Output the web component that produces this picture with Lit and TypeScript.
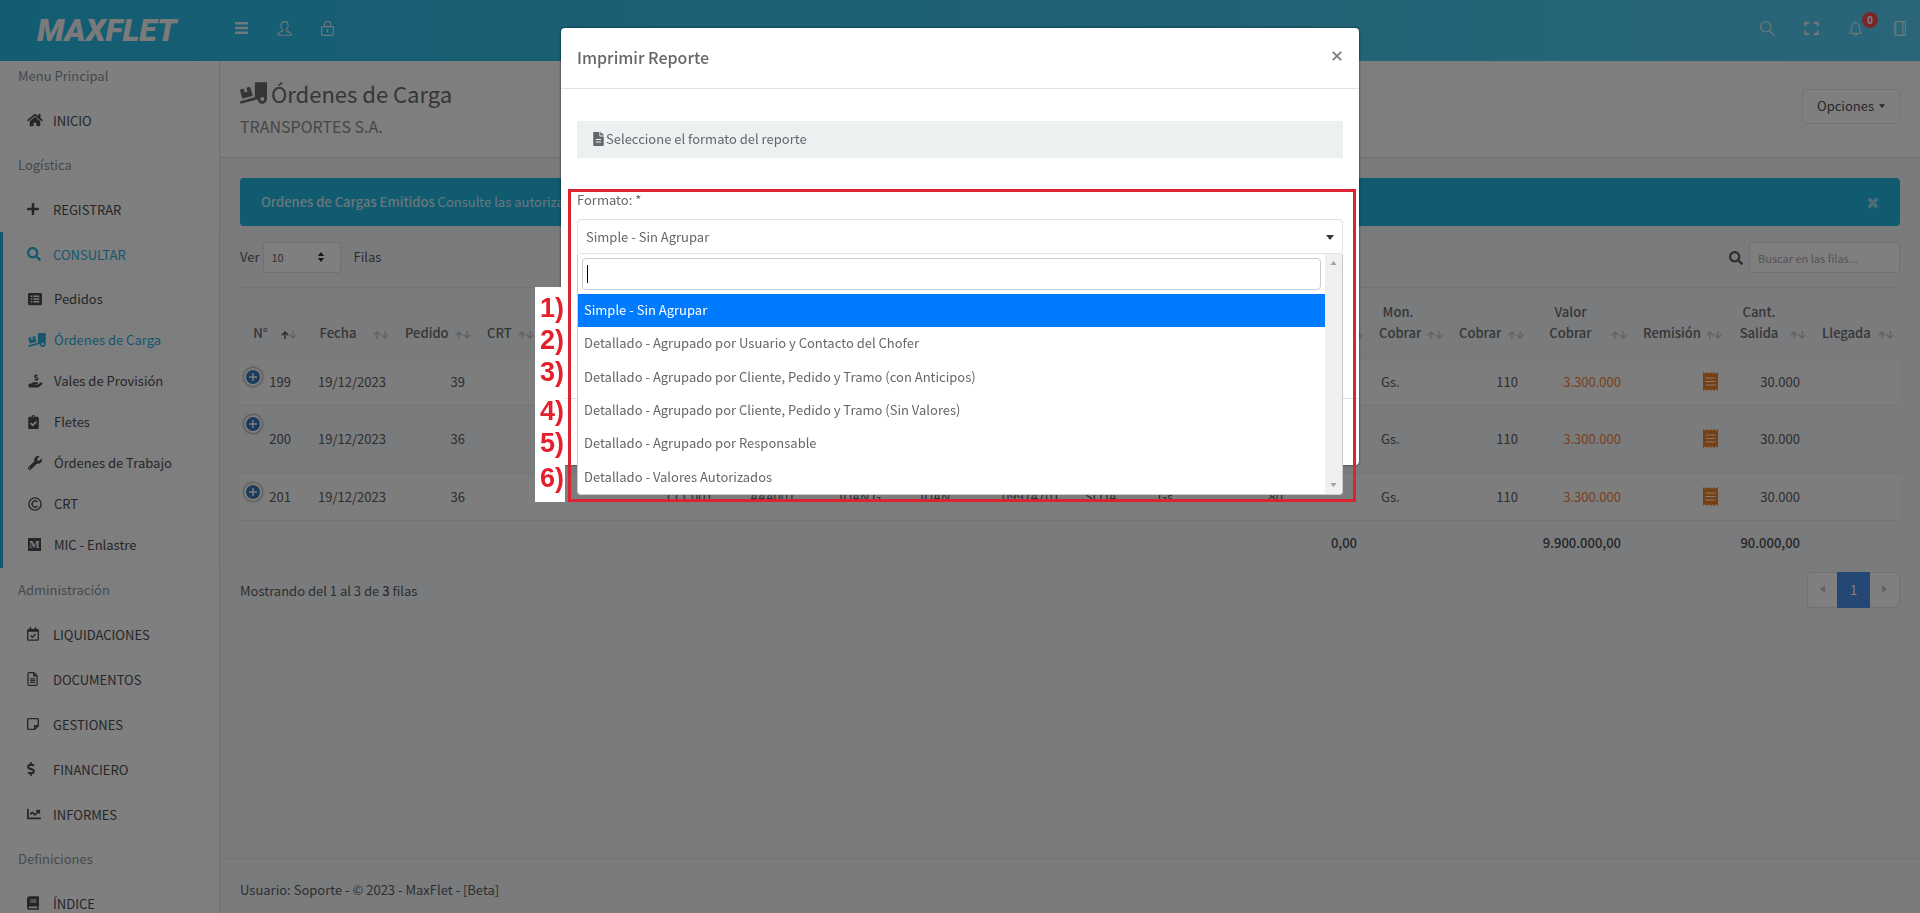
import { LitElement, html, svg, css, nothing } from "lit";
import { customElement, state } from "lit/decorators.js";

type Icon = { box: string; body: unknown };

const solid = (box: string, d: string): Icon => ({ box, body: svg`<path fill="currentColor" fill-rule="evenodd" d=${d}></path>` });
const line = (box: string, d: string, width = 1): Icon => ({
  box,
  body: svg`<path fill="none" stroke="currentColor" stroke-width=${width} stroke-linejoin="round" d=${d}></path>`,
});

const ICONS: Record<string, Icon> = {
  home: solid("0 0 576 512", "M280.37 148.26L96 300.11V464a16 16 0 0 0 16 16l112.06-.29a16 16 0 0 0 15.92-16V368a16 16 0 0 1 16-16h64a16 16 0 0 1 16 16v95.64a16 16 0 0 0 16 16.05L464 480a16 16 0 0 0 16-16V300L295.67 148.26a12.19 12.19 0 0 0-15.3 0zM571.6 251.47L488 182.56V44.05a12 12 0 0 0-12-12h-56a12 12 0 0 0-12 12v72.61L318.47 43a48 48 0 0 0-61 0L4.34 251.47a12 12 0 0 0-1.6 16.9l25.5 31A12 12 0 0 0 45.15 301l235.22-193.74a12.19 12.19 0 0 1 15.3 0L530.9 301a12 12 0 0 0 16.9-1.6l25.5-31a12 12 0 0 0-1.7-16.93z"),
  plus: solid("0 0 448 512", "M416 208H272V64c0-17.67-14.33-32-32-32h-32c-17.67 0-32 14.33-32 32v144H32c-17.67 0-32 14.33-32 32v32c0 17.67 14.33 32 32 32h144v144c0 17.67 14.33 32 32 32h32c17.67 0 32-14.33 32-32V304h144c17.67 0 32-14.33 32-32v-32c0-17.67-14.33-32-32-32z"),
  search: solid("0 0 512 512", "M505 442.7L405.3 343c-4.5-4.5-10.6-7-17-7H372c27.6-35.3 44-79.7 44-128C416 93.1 322.9 0 208 0S0 93.1 0 208s93.1 208 208 208c48.3 0 92.7-16.4 128-44v16.3c0 6.4 2.5 12.5 7 17l99.7 99.7c9.4 9.4 24.6 9.4 33.9 0l28.3-28.3c9.4-9.4 9.4-24.6.1-34zM208 336c-70.7 0-128-57.2-128-128 0-70.7 57.2-128 128-128 70.7 0 128 57.2 128 128 0 70.7-57.2 128-128 128z"),
  list: solid("0 0 512 512", "M464 32H48C21.5 32 0 53.5 0 80v352c0 26.5 21.5 48 48 48h416c26.500 0 48-21.5 48-48V80c0-26.500-21.500-48-48-48zM100 132h56v48h-56zM196 132h216v48H196zM100 232h56v48h-56zM196 232h216v48H196zM100 332h56v48h-56zM196 332h216v48H196z"),
  truck: solid("0 0 640 512", "M50.2 375.6c2.3 8.5 11.1 13.6 19.6 11.3l216.4-58c8.5-2.3 13.6-11.1 11.3-19.6l-49.7-185.5c-2.3-8.5-11.1-13.6-19.6-11.3L151 133.300l24.800 92.700-61.800 16.500-24.800-92.700-77.300 20.700C3.400 172.800-1.700 181.600.6 190.100l49.600 185.500zM384 0c-17.700 0-32 14.300-32 32v323.600L5.900 450c-4.300 1.200-6.800 5.600-5.600 9.800l12.600 46.300c1.200 4.300 5.600 6.800 9.800 5.600l393.700-107.400C418.800 464.100 467.600 512 528 512c61.900 0 112-50.100 112-112V0H384zm144 448c-26.500 0-48-21.500-48-48s21.500-48 48-48 48 21.500 48 48-21.500 48-48 48z"),
  hand: {
    box: "0 0 16 16",
    body: svg`<path fill="currentColor" d="M0 11.200h2.600l1.500-1.100c.6-.4 1.200-.6 1.900-.6h4c1.300 0 1.300 1.900 0 1.900H7.300v.6h3.500l2.900-2c1.300-.9 2.900.6 1.800 1.800l-4 3.200c-.4.300-.9.500-1.400.5H0z"></path><path fill="none" stroke="currentColor" stroke-width="1.500" d="M10.600 2.300c-1-.7-3.700-.8-3.700.6 0 1.600 3.900.8 3.900 2.500 0 1.500-2.900 1.400-4 .5M8.800.2v1.600M8.800 6.300v1.500"></path>`,
  },
  clipboard: solid("0 0 384 512", "M336 64h-80c0-35.300-28.700-64-64-64s-64 28.700-64 64H48C21.500 64 0 85.500 0 112v352c0 26.500 21.500 48 48 48h288c26.500 0 48-21.500 48-48V112c0-26.500-21.500-48-48-48zM192 40c13.300 0 24 10.700 24 24s-10.700 24-24 24-24-10.700-24-24 10.700-24 24-24zm121.200 231.800l-143 141.800c-4.700 4.700-12.300 4.600-17-.1l-82.600-83.300c-4.700-4.700-4.600-12.300.1-17L99.100 285c4.700-4.700 12.300-4.600 17 .1l46 46.400 106-105.200c4.700-4.700 12.300-4.600 17 .1l28.200 28.400c4.700 4.800 4.600 12.300-.1 17z"),
  wrench: solid("0 0 512 512", "M507.730 109.100c-2.240-9.030-13.540-12.090-20.120-5.510l-74.360 74.360-67.880-11.310-11.310-67.880 74.360-74.360c6.620-6.620 3.430-17.900-5.660-20.160-47.380-11.740-99.550.91-136.580 37.930-39.640 39.640-50.550 97.100-34.050 147.200L18.740 402.760c-24.990 24.990-24.990 65.510 0 90.500 24.990 24.990 65.510 24.990 90.500 0l213.210-213.210c50.120 16.710 107.470 5.680 147.370-34.220 37.070-37.070 49.700-89.320 37.910-136.730zM64 472c-13.250 0-24-10.750-24-24 0-13.260 10.750-24 24-24s24 10.740 24 24c0 13.250-10.750 24-24 24z"),
  copyright: {
    box: "0 0 16 16",
    body: svg`<circle cx="8" cy="8" r="7" fill="none" stroke="currentColor" stroke-width="1.600"></circle><path fill="none" stroke="currentColor" stroke-width="1.700" d="M11 10.300a3.600 3.600 0 1 1 0-4.600"></path>`,
  },
  calendar: {
    box: "0 0 14 16",
    body: svg`<path fill="none" stroke="currentColor" stroke-width="1.600" d="M1.800 3h10.400a1 1 0 0 1 1 1v10.200a1 1 0 0 1-1 1H1.800a1 1 0 0 1-1-1V4a1 1 0 0 1 1-1zM4.200 9.800l2 2 3.800-3.900"></path><path fill="currentColor" d="M1 2.500h12v3H1zM3 0h2v3H3zM9 0h2v3H9z"></path>`,
  },
  document: line("0 0 12 16", "M1.800.8h5.900l3.500 3.500v9.900a1 1 0 0 1-1 1H1.800a1 1 0 0 1-1-1V1.800a1 1 0 0 1 1-1zM7.500.8v3.700h3.700M3 7.800h6M3 9.900h6M3 12h6", 1.4),
  note: line("0 0 14 14", "M1.800.8h10.400a1 1 0 0 1 1 1V9l-4.200 4.200H1.800a1 1 0 0 1-1-1V1.800a1 1 0 0 1 1-1zM13 9H9v4", 1.6),
  dollar: solid("0 0 288 512", "M209.200 233.400l-108-31.600C88.700 198.200 80 186.500 80 173.500c0-16.300 13.200-29.500 29.500-29.500h66.300c12.200 0 24.200 3.700 34.200 10.500 6.100 4.100 14.300 3.100 19.500-2l34.800-34c7.100-6.900 6.100-18.400-1.800-24.500C238 74.800 207.400 64.100 176 64V16c0-8.800-7.200-16-16-16h-32c-8.800 0-16 7.200-16 16v48h-2.500C45.800 64-5.400 118.700.5 183.600c4.200 46.100 39.400 83.600 83.800 96.600l102.500 30c12.500 3.700 21.200 15.300 21.200 28.300 0 16.300-13.200 29.500-29.500 29.500h-66.300C100 368 88 364.300 78 357.500c-6.100-4.100-14.300-3.100-19.500 2l-34.800 34c-7.100 6.900-6.100 18.400 1.800 24.500 24.500 19.200 55.100 29.900 86.500 30v48c0 8.800 7.200 16 16 16h32c8.800 0 16-7.200 16-16v-48.200c46.600-.9 90.300-28.600 105.700-72.700 21.500-61.600-14.600-124.800-72.500-141.700z"),
  chart: solid("0 0 512 512", "M496 384H64V80c0-8.840-7.160-16-16-16H16C7.160 64 0 71.160 0 80v336c0 17.670 14.330 32 32 32h464c8.840 0 16-7.160 16-16v-32c0-8.840-7.160-16-16-16zM464 96H345.940c-21.380 0-32.090 25.850-16.970 40.970l32.400 32.400L288 242.750l-73.370-73.370c-12.500-12.500-32.760-12.500-45.250 0l-68.690 68.690c-6.250 6.250-6.250 16.380 0 22.630l22.620 22.620c6.250 6.250 16.380 6.250 22.630 0L192 237.250l73.370 73.370c12.500 12.500 32.760 12.500 45.250 0l96-96 32.400 32.400c15.120 15.120 40.970 4.410 40.970-16.970V112c.01-8.840-7.150-16-15.990-16z"),
  book: solid("0 0 14 16", "M3 0h10.200c.4 0 .8.4.8.8v10.400c0 .3-.1.500-.3.600-.1.500-.1 1.600 0 2.100.2.200.3.300.3.500v.8c0 .4-.4.800-.8.800H3a3 3 0 0 1-3-3V3a3 3 0 0 1 3-3zM3 12a1 1 0 0 0 0 2h9v-2zM4 4v1h7V4zM4 6.300v1h7v-1z"),
  file: solid("0 0 384 512", "M224 136V0H24C10.700 0 0 10.700 0 24v464c0 13.300 10.700 24 24 24h336c13.300 0 24-10.700 24-24V160H248c-13.200 0-24-10.800-24-24zM96 256h192v40H96zM96 344h192v40H96zM384 121.900v6.100H256V0h6.100c6.400 0 12.500 2.500 17 7l97.900 98c4.500 4.500 7 10.600 7 16.900z"),
  receipt: solid("0 0 15 19", "M0 0l2 1.800L4 0l1.800 1.800L7.500 0l1.700 1.800L11 0l2 1.800L15 0v19l-2-1.800L11 19l-1.800-1.800L7.500 19l-1.700-1.800L4 19l-2-1.800L0 19zM2.500 5.400v1h10v-1zM2.500 9v1h10V9zM2.500 12.600v1h10v-1z"),
  menu: solid("0 0 13 12", "M0 0h13v2.400H0zM0 4.800h13v2.400H0zM0 9.600h13v2.400H0z"),
  user: line("0 0 15 15", "M7.500.6c2.300 0 3.600 1.700 3.600 3.900 0 1.600-.6 3.200-1.700 4.200v1.200c0 .6 4.900 1 4.900 4.400H.7c0-3.400 4.900-3.800 4.900-4.400V8.700C4.500 7.700 3.900 6.100 3.900 4.500 3.900 2.300 5.200.6 7.500.6z", 1.1),
  lock: line("0 0 13 15", "M1.500 5.600h10a.9.9 0 0 1 .9.9v7a.9.9 0 0 1-.9.9h-10a.9.9 0 0 1-.9-.9v-7a.9.9 0 0 1 .9-.9zM3.300 5.500V3.700a3.200 3.200 0 0 1 6.400 0v1.800M6.500 8.500v3M5.700 8.800h1.600", 1.1),
  find: line("0 0 15 15", "M10.900 5.800a5.200 5.200 0 1 1-10.400 0 5.200 5.200 0 0 1 10.400 0zM9.400 9.600l5 5", 1.1),
  expand: line("0 0 14 13", "M1.200 4.500V1.200h3.500M9.300 1.200h3.500v3.300M12.800 8.500v3.300H9.300M4.700 11.800H1.200V8.500", 2),
  bell: line("0 0 13 15", "M6.500.4v1.200M.7 12.300c1.300-1.300 1.900-2.300 1.900-5.800 0-3 1.500-4.800 3.900-4.800s3.900 1.800 3.900 4.800c0 3.500.6 4.500 1.900 5.800zM4.800 12.500c0 2.400 3.400 2.400 3.400 0", 1.1),
  notebook: line("0 0 13 15", "M2.600.6h9.800v13.800H2.600zM9.800.6v13.800M.3 3h3.200M.3 5.300h3.200M.3 7.500h3.200M.3 9.700h3.200M.3 12h3.200", 1.1),
  close: line("0 0 10 10", "M.8.8l8.400 8.400M9.200.8L.8 9.200", 1.8),
  closeBold: line("0 0 12 12", "M1.800 1.800l8.400 8.400M10.200 1.800l-8.400 8.400", 3.4),
  up: line("0 0 8 8", "M4 8V1M.7 4.300L4 1l3.300 3.300", 1.5),
  down: line("0 0 8 8", "M4 0v7M.7 3.700L4 7l3.300-3.300", 1.5),
  caretDown: solid("0 0 8 5", "M0 0h8L4 5z"),
  caretUp: solid("0 0 8 5", "M0 5h8L4 0z"),
  caretLeft: solid("0 0 5 8", "M5 0v8L0 4z"),
  caretRight: solid("0 0 5 8", "M0 0v8l5-4z"),
};

const icon = (name: string, cls: string) => {
  const i = ICONS[name];
  return html`<svg class=${cls} viewBox=${i.box} aria-hidden="true">${i.body}</svg>`;
};

const base = css`
  :host { display: block; }
  * { box-sizing: border-box; }
  svg { display: block; flex: none; }
  button, input, select { font: inherit; color: inherit; margin: 0; }
  button { padding: 0; border: 0; background: none; cursor: pointer; }
  a { color: inherit; text-decoration: none; }
`;

@customElement("mf-topbar")
class Topbar extends LitElement {
  static styles = [base, css`
    .bar { display: flex; align-items: flex-start; height: 61px; padding: 0 13px 0 37px; color: #ddeff6;
      background: linear-gradient(90deg, #26bae6, #54cbf0); }
    .brand { width: 197px; font: italic 900 32px/60px Roboto, sans-serif; color: #f4f4f4; }
    .group { display: flex; align-items: center; gap: 28px; height: 56px; }
    .right { margin-left: auto; gap: 29px; }
    .icon { width: 15px; height: 15px; }
    .wide { height: 12px; }
    .alerts { position: relative; }
    .badge { position: absolute; left: 14px; top: -9px; width: 16px; height: 16px; border-radius: 8px;
      background: #f44c50; color: #fff; font-size: 10px; line-height: 15px; font-weight: 700; text-align: center; }
  `];
  render() {
    return html`<header class="bar">
      <a class="brand" href="#">MAXFLET</a>
      <nav class="group">
        <button aria-label="Menú">${icon("menu", "icon wide")}</button>
        <button aria-label="Usuario">${icon("user", "icon")}</button>
        <button aria-label="Bloquear">${icon("lock", "icon")}</button>
      </nav>
      <nav class="group right">
        <button aria-label="Buscar">${icon("find", "icon")}</button>
        <button aria-label="Pantalla completa">${icon("expand", "icon")}</button>
        <button class="alerts" aria-label="Notificaciones">${icon("bell", "icon")}<span class="badge">0</span></button>
        <button aria-label="Panel">${icon("notebook", "icon")}</button>
      </nav>
    </header>`;
  }
}

type Item = { label: string; icon: string; w: number; active?: boolean; children?: Item[] };
const MENU: { title: string; items: Item[] }[] = [
  { title: "Menu Principal", items: [{ label: "INICIO", icon: "home", w: 16 }] },
  {
    title: "Logística",
    items: [
      { label: "REGISTRAR", icon: "plus", w: 12 },
      {
        label: "CONSULTAR", icon: "search", w: 14, active: true,
        children: [
          { label: "Pedidos", icon: "list", w: 14 },
          { label: "Órdenes de Carga", icon: "truck", w: 18, active: true },
          { label: "Vales de Provisión", icon: "hand", w: 15 },
          { label: "Fletes", icon: "clipboard", w: 11 },
          { label: "Órdenes de Trabajo", icon: "wrench", w: 14 },
          { label: "CRT", icon: "copyright", w: 14 },
          { label: "MIC - Enlastre", icon: "medium", w: 13 },
        ],
      },
    ],
  },
  {
    title: "Administración",
    items: [
      { label: "LIQUIDACIONES", icon: "calendar", w: 12 },
      { label: "DOCUMENTOS", icon: "document", w: 11 },
      { label: "GESTIONES", icon: "note", w: 12 },
      { label: "FINANCIERO", icon: "dollar", w: 8 },
      { label: "INFORMES", icon: "chart", w: 14 },
    ],
  },
  { title: "Definiciones", items: [{ label: "ÍNDICE", icon: "book", w: 12 }] },
];

@customElement("mf-sidebar")
class Sidebar extends LitElement {
  static styles = [base, css`
    :host { width: 220px; flex: none; overflow: hidden; background: #fff; border-right: 1px solid #dcdfe3; color: #4b4d50; font-size: 13px; }
    .head { padding: 7px 0 7px 18px; line-height: 29px; height: 44px; color: #8b9297; }
    .head.first { padding-top: 0; height: 37px; }
    ul { list-style: none; margin: 0; padding: 0; }
    .link { display: flex; align-items: center; height: 45px; padding: 0 0 1px 27px; }
    .mark { width: 26px; display: flex; }
    .glyph { height: 14px; }
    .medium { width: 13px; height: 13px; background: #4b4d50; color: #fff; font: 700 11px/13px "Liberation Serif", serif; text-align: center; }
    .on { color: #29aedb; }
    .open { border-left: 3px solid #1fb1de; background: #fdfdfd; }
    .open .link { padding-left: 24px; }
    .sub { padding: 1px 0 3px; }
    .sub .link { height: 41px; padding: 0 0 0 25px; }
  `];
  private link(i: Item): unknown {
    return html`<a class="link ${i.active ? "on" : ""}" href="#">
      <span class="mark">${i.icon === "medium" ? html`<span class="medium" aria-hidden="true">M</span>` : this.glyph(i)}</span>${i.label}</a>`;
  }
  private glyph(i: Item) {
    const g = ICONS[i.icon];
    return html`<svg class="glyph" style="width:${i.w}px" viewBox=${g.box} aria-hidden="true">${g.body}</svg>`;
  }
  render() {
    return html`<nav>
      ${MENU.map((s, n) => html`
        <div class="head ${n ? "" : "first"}">${s.title}</div>
        <ul>${s.items.map((i) => html`<li class=${i.children ? "open" : ""}>${this.link(i)}
          ${i.children ? html`<ul class="sub">${i.children.map((c) => html`<li>${this.link(c)}</li>`)}</ul>` : nothing}
        </li>`)}</ul>`)}
    </nav>`;
  }
}

type Column = { head: string[]; width: number; align: string; sorted?: boolean };
const COLUMNS: Column[] = [
  { head: ["N°"], width: 63, align: "end", sorted: true },
  { head: ["Fecha"], width: 92, align: "date" },
  { head: ["Pedido"], width: 82, align: "end" },
  { head: ["CRT"], width: 63, align: "end" },
  { head: [], width: 115, align: "start" },
  { head: [], width: 83, align: "start" },
  { head: [], width: 86, align: "start" },
  { head: [], width: 81, align: "start" },
  { head: [], width: 85, align: "start" },
  { head: [], width: 83, align: "start" },
  { head: [], width: 73, align: "start" },
  { head: [], width: 74, align: "start" },
  { head: [], width: 75, align: "end" },
  { head: [], width: 74, align: "end" },
  { head: ["Mon.", "Cobrar"], width: 80, align: "start" },
  { head: ["Cobrar"], width: 81, align: "end" },
  { head: ["Valor", "Cobrar"], width: 103, align: "end amount" },
  { head: ["Remisión"], width: 95, align: "end slip" },
  { head: ["Cant.", "Salida"], width: 84, align: "end" },
  { head: ["Llegada"], width: 88, align: "end" },
];
const none = (n: number): string[] => Array(n).fill("");
const ROWS = [
  { cls: "", cells: ["199", "19/12/2023", "39", ...none(11), "Gs.", "110", "3.300.000", "*", "30.000", ""] },
  { cls: "tall", cells: ["200", "19/12/2023", "36", ...none(11), "Gs.", "110", "3.300.000", "*", "30.000", ""] },
  { cls: "", cells: ["201", "19/12/2023", "36", "", "", "CCC001", "AAA001", "JUAN G.", "JUAN", "09914701", "SOJA", "Gs.", "80", "", "Gs.", "110", "3.300.000", "*", "30.000", ""] },
];
const TOTALS = [...none(13), "0,00", "", "", "9.900.000,00", "", "90.000,00", ""];

@customElement("mf-orders")
class Orders extends LitElement {
  static styles = [base, css`
    :host { flex: 1; min-width: 0; display: flex; flex-direction: column; background: #f4f6f8; color: #5a5c5f; font-size: 13px; line-height: 21px; }
    .head { display: flex; justify-content: space-between; height: 97px; padding: 12px 20px 0 20px; background: #fcfcfe; border-bottom: 1px solid #dadce0; }
    h1 { display: flex; align-items: center; gap: 4px; margin: 0; font-weight: 400; font-size: 22px; line-height: 40px; color: #6a6c70; }
    .truck { width: 27px; height: 22px; }
    h2 { margin: 0; font-weight: 400; font-size: 16px; line-height: 26px; color: #8a8d92; }
    .options { display: flex; align-items: center; gap: 5px; height: 35px; margin-top: 16px; padding: 0 14px 2px; background: #fff;
      border: 1px solid #e6e8ec; border-radius: 3px; color: #4b4d50; }
    .caret { width: 6px; height: 4px; }
    .content { flex: 1; padding: 20px 20px 0; }
    .alert { display: flex; align-items: center; justify-content: space-between; height: 48px; padding: 0 21px 2px; border-radius: 4px; background: #22b6e2; color: #d3edf6; }
    b { font-weight: 500; }
    .dismiss { width: 12px; height: 12px; color: #a0dbee; margin-top: 3px; }
    .tools { display: flex; align-items: center; height: 31px; margin: 16px 0 14px; }
    .word { padding-bottom: 2px; }
    .rows { position: relative; margin: 0 13px 0 3px; }
    select, input { height: 31px; border: 1px solid #dfe1e5; border-radius: 3px; background: #fff; font-size: 11px; outline: 0; }
    select { width: 78px; padding: 0 8px; appearance: none; }
    .updown { position: absolute; right: 16px; top: 10px; display: grid; gap: 2px; pointer-events: none; color: #303030; }
    .tick { width: 8px; height: 4px; }
    .lens { width: 14px; height: 14px; margin: 0 6px 0 auto; }
    input { width: 151px; padding: 0 8px; }
    input::placeholder { color: #a6a8ac; opacity: 1; }
    table { width: 100%; table-layout: fixed; border-collapse: separate; border-spacing: 0; }
    th, td { position: relative; padding: 0 12px 2px; border-top: 1px solid #e8eaed; font-weight: 400; white-space: nowrap; }
    th { padding: 13px 32px 15px 10px; height: 71px; vertical-align: bottom; font-weight: 500; color: #6a6c70; text-align: center; }
    .sort { position: absolute; right: 6px; bottom: 19px; display: flex; color: #c4c6c9; }
    .arrow { width: 8px; height: 8px; }
    .asc { color: #5a5c5f; }
    td { height: 47px; text-align: left; }
    .end { text-align: right; }
    td.date { padding-left: 15px; }
    .tall td { height: 68px; }
    tbody tr:nth-child(odd) td { background: #fafafc; }
    .amount { color: #f4803a; }
    td.slip { color: #ee8024; padding-right: 10px; }
    .receipt { width: 15px; height: 19px; margin-left: auto; }
    .toggle { position: absolute; left: 4px; top: 9px; width: 18px; height: 18px; border: 2px solid #fff; border-radius: 9px;
      background: #3579b5; color: #fff; box-shadow: 0 0 3px #444; display: grid; place-items: center; }
    .cross { width: 8px; height: 8px; }
    tfoot td { font-weight: 500; height: 46px; color: #4b4d50; }
    .foot { display: flex; justify-content: space-between; align-items: center; margin-top: 6px; height: 36px; }
    .pages { display: flex; border: 1px solid #e0e2e6; border-radius: 4px; background: #fff; }
    .page { width: 29px; height: 34px; display: grid; place-items: center; padding-bottom: 2px; color: #c4c6ca; }
    .current { width: 33px; height: 36px; margin: -1px 0; background: #4a8fe8; color: #fff; }
    .tri { width: 5px; height: 8px; }
    footer { height: 55px; padding: 20px 20px 0; border-top: 1px solid #e4e6e9; }
  `];
  @state() private filter = "";
  private cross = svg`<path d="M4 0v8M0 4h8" stroke="currentColor" stroke-width="1.400"></path>`;
  private cell(value: string, i: number) {
    return html`<td class=${COLUMNS[i].align}>
      ${i === 0 ? html`<button class="toggle" aria-label="Ver detalle"><svg class="cross" viewBox="0 0 8 8">${this.cross}</svg></button>` : nothing}
      ${value === "*" ? icon("receipt", "receipt") : value}</td>`;
  }
  render() {
    return html`
      <div class="head">
        <div><h1>${icon("truck", "truck")}Órdenes de Carga</h1><h2>TRANSPORTES S.A.</h2></div>
        <button class="options">Opciones ${icon("caretDown", "caret")}</button>
      </div>
      <div class="content">
        <div class="alert" role="alert"><span><b>Ordenes de Cargas Emitidos</b> Consulte las autorizac</span>
          <button aria-label="Cerrar aviso">${icon("closeBold", "dismiss")}</button></div>
        <div class="tools">
          <label class="word" for="size">Ver</label>
          <span class="rows"><select id="size"><option>10</option></select>
            <span class="updown">${icon("caretUp", "tick")}${icon("caretDown", "tick")}</span></span>
          <span class="word">Filas</span>
          ${icon("search", "lens")}
          <input type="text" aria-label="Buscar en las filas" placeholder="Buscar en las filas..." .value=${this.filter}
            @input=${(e: Event) => (this.filter = (e.target as HTMLInputElement).value)}>
        </div>
        <table>
          <colgroup>${COLUMNS.map((c) => html`<col style="width:${c.width}px">`)}</colgroup>
          <thead><tr>${COLUMNS.map((c) => html`<th scope="col">${c.head.map((h, n) => html`${n ? html`<br>` : nothing}${h}`)}
            <span class="sort">${icon("up", c.sorted ? "arrow asc" : "arrow")}${icon("down", "arrow")}</span></th>`)}</tr></thead>
          <tbody>${ROWS.map((r) => html`<tr class=${r.cls}>${r.cells.map((v, i) => this.cell(v, i))}</tr>`)}</tbody>
          <tfoot><tr>${TOTALS.map((v) => html`<td class="end">${v}</td>`)}</tr></tfoot>
        </table>
        <div class="foot">
          <span>Mostrando del 1 al 3 de <b>3</b> filas</span>
          <nav class="pages" aria-label="Páginas">
            <button class="page" aria-label="Anterior">${icon("caretLeft", "tri")}</button>
            <button class="page current">1</button>
            <button class="page" aria-label="Siguiente">${icon("caretRight", "tri")}</button>
          </nav>
        </div>
      </div>
      <footer>Usuario: Soporte - © 2023 - MaxFlet - [Beta]</footer>`;
  }
}

const FORMATS = [
  "Simple - Sin Agrupar",
  "Detallado - Agrupado por Usuario y Contacto del Chofer",
  "Detallado - Agrupado por Cliente, Pedido y Tramo (con Anticipos)",
  "Detallado - Agrupado por Cliente, Pedido y Tramo (Sin Valores)",
  "Detallado - Agrupado por Responsable",
  "Detallado - Valores Autorizados",
];

@customElement("mf-report-dialog")
class ReportDialog extends LitElement {
  static styles = [base, css`
    .dialog { position: relative; width: 798px; margin: 28px auto 0; background: #fff; border-radius: 4px; box-shadow: 0 0 3px rgba(0, 0, 0, .6); color: #646669; font-size: 13px; line-height: 21px; }
    .title { display: flex; justify-content: space-between; align-items: center; height: 61px; padding: 0 17px 2px 16px; border-bottom: 1px solid #dee2e6; }
    h3 { margin: 0; font-size: 16px; font-weight: 500; }
    .close { width: 10px; height: 10px; margin-bottom: 2px; color: #7a7c7f; }
    .body { height: 309px; padding: 32px 16px 0; }
    .hint { display: flex; align-items: center; gap: 2px; height: 37px; margin: 0 0 32px; padding: 0 0 2px 16px; background: #ecf0f1; }
    .file { width: 11px; height: 14px; }
    .field { position: relative; }
    label { display: block; height: 29px; line-height: 20px; }
    .pick { display: block; width: 100%; height: 35px; padding: 0 8px; border: 1px solid #dde3e6; border-radius: 4px; background: #fff; appearance: none; outline: 0; }
    .caret { position: absolute; right: 9px; top: 45px; width: 8px; height: 5px; color: #343a40; }
    .drop { position: absolute; left: 0; right: 0; top: 64px; height: 241px; display: flex; background: #fff; border: 1px solid #c8ccd0; border-top: 0; border-radius: 0 0 4px 4px; overflow: hidden; }
    .list { flex: 1; display: flex; flex-direction: column; }
    .filter { height: 32px; margin: 4px; border: 1px solid #c8ccd0; border-radius: 4px; padding: 0 4px; outline: 0; }
    .find { position: relative; display: grid; }
    .cursor { position: absolute; left: 9px; top: 11px; width: 1px; height: 18px; background: #000; }
    .options { flex: 1; display: grid; grid-auto-rows: 1fr; }
    .option { padding: 0 6px 2px; text-align: left; }
    .chosen { background: #007bff; color: #fff; }
    .scroll { width: 17px; background: #f0f0f0; color: #a3a3a3; display: flex; flex-direction: column; justify-content: space-between; align-items: center; padding: 7px 0; }
    .tip { width: 7px; height: 4px; }
    .bottom { height: 67px; border-top: 1px solid #dee2e6; }
  `];
  @state() private chosen = 0;
  render() {
    return html`<section class="dialog" role="dialog" aria-modal="true" aria-labelledby="title">
      <div class="title"><h3 id="title">Imprimir Reporte</h3><button aria-label="Cerrar">${icon("close", "close")}</button></div>
      <div class="body">
        <p class="hint">${icon("file", "file")}Seleccione el formato del reporte</p>
        <div class="field">
          <label for="format">Formato: *</label>
          <select class="pick" id="format"><option>${FORMATS[this.chosen]}</option></select>
          ${icon("caretDown", "caret")}
          <div class="drop">
            <div class="list">
              <div class="find"><input class="filter" type="text" aria-label="Filtrar formatos"><span class="cursor"></span></div>
              <div class="options" role="listbox">
                ${FORMATS.map((f, i) => html`<button class="option ${i === this.chosen ? "chosen" : ""}" role="option"
                  aria-selected=${i === this.chosen} @click=${() => (this.chosen = i)}>${f}</button>`)}
              </div>
            </div>
            <div class="scroll" aria-hidden="true">${icon("caretUp", "tip")}${icon("caretDown", "tip")}</div>
          </div>
        </div>
      </div>
      <div class="bottom"></div>
      <mf-callouts></mf-callouts>
    </section>`;
  }
}

const CALLOUTS = [4, 36, 68, 107, 139, 174];

@customElement("mf-callouts")
class Callouts extends LitElement {
  static styles = [base, css`
    :host { position: absolute; left: -26px; right: 3px; top: 161px; height: 313px; pointer-events: none; }
    .frame { position: absolute; inset: 0 0 0 33px; border: 3px solid #dc2430; }
    .strip { position: absolute; left: 0; top: 98px; bottom: 0; width: 30px; background: #fff; }
    .tag { position: absolute; left: 5px; color: #e4202e; font: 700 27px/34px "Liberation Sans", Arial, sans-serif; }
  `];
  render() {
    return html`<div class="frame"></div><div class="strip">
      ${CALLOUTS.map((top, i) => html`<span class="tag" style="top:${top}px">${i + 1})</span>`)}</div>`;
  }
}

@customElement("app-root")
class AppRoot extends LitElement {
  static styles = [base, css`
    :host { font-family: "Noto Sans CJK SC", "Noto Sans", sans-serif; }
    .page { display: flex; flex-direction: column; height: 100vh; overflow: hidden; }
    .main { flex: 1; min-height: 0; display: flex; }
    .shade { position: fixed; inset: 0; background: rgba(0, 0, 0, .5); }
  `];
  render() {
    return html`<div class="page"><mf-topbar></mf-topbar>
      <div class="main"><mf-sidebar></mf-sidebar><mf-orders></mf-orders></div></div>
      <div class="shade"><mf-report-dialog></mf-report-dialog></div>`;
  }
}
